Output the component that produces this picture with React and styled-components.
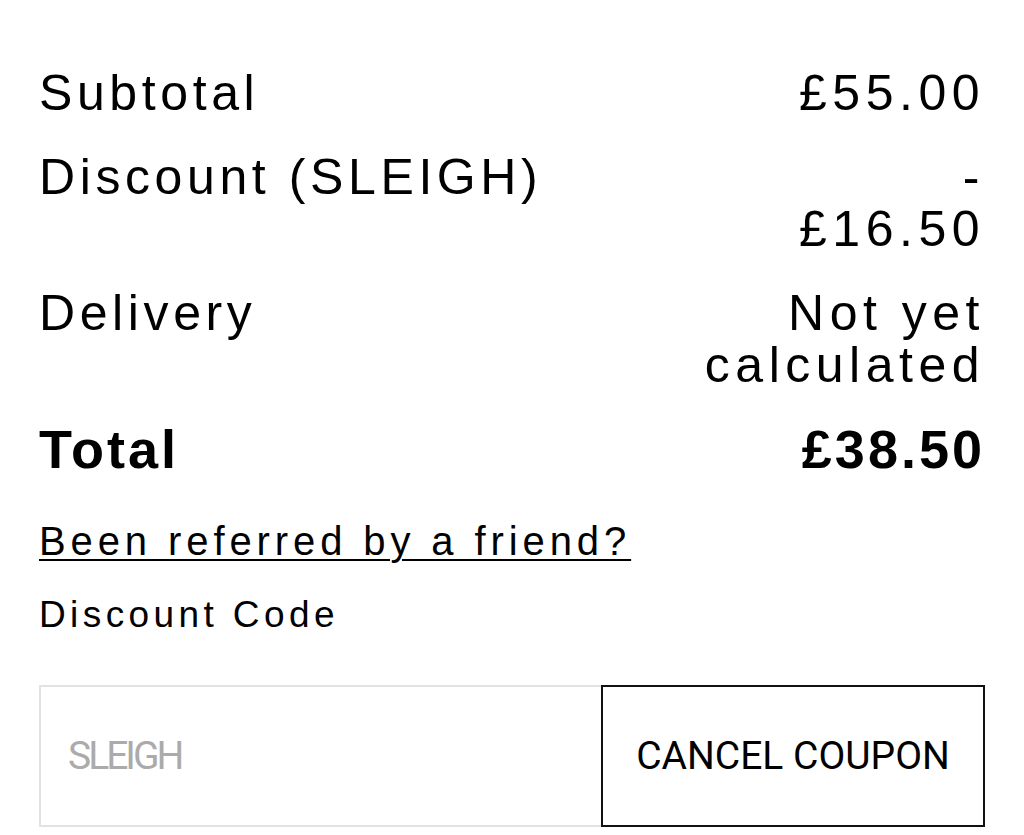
import React from "react";
import styled, { createGlobalStyle } from "styled-components";

const GlobalStyle = createGlobalStyle`
    body {
        margin: 0;
        background: #fff;
        color: #000;
        font-family: "Liberation Sans", Arial, sans-serif;
    }
`;

const Summary = styled.div`
    padding: 67px 39px 0;
`;

const Rows = styled.div`
    display: flex;
    flex-direction: column;
    gap: 32px;
`;

const Row = styled.div`
    display: flex;
    justify-content: space-between;
    align-items: flex-start;
    font-size: ${(p) => (p.$total ? "54px" : "50px")};
    font-weight: ${(p) => (p.$total ? 700 : 400)};
    letter-spacing: ${(p) => (p.$total ? "3px" : "4.6px")};
    line-height: 52px;
`;

const Value = styled.div`
    text-align: right;
    letter-spacing: ${(p) => (p.$total ? "3px" : "5.5px")};
    max-width: ${(p) => (p.$narrow ? "300px" : "none")};
`;

const ReferLink = styled.a`
    display: inline-block;
    margin-top: 42px;
    font-size: 40px;
    line-height: 48px;
    letter-spacing: 4.9px;
    color: #000;
    text-decoration: underline;
    text-decoration-thickness: 2px;
    text-underline-offset: 4px;
`;

const FieldLabel = styled.label`
    display: block;
    margin-top: 28px;
    font-size: 37px;
    line-height: 44px;
    letter-spacing: 4.4px;
`;

const CouponForm = styled.div`
    display: flex;
    margin-top: 48px;
    height: 142px;
`;

const CodeInput = styled.input`
    flex: 1;
    min-width: 0;
    box-sizing: border-box;
    height: 100%;
    border: 2px solid #e2e2e2;
    border-right: none;
    padding: 0 0 0 27px;
    font-family: Roboto, sans-serif;
    font-size: 39px;
    letter-spacing: -3px;
    color: #000;
    outline: none;
    &::placeholder {
        color: #ababab;
    }
`;

const CancelButton = styled.button`
    width: 384px;
    box-sizing: border-box;
    height: 100%;
    background: #fff;
    border: 2px solid #111;
    font-family: Roboto, sans-serif;
    font-size: 39px;
    letter-spacing: 0;
    color: #000;
    padding: 0;
    cursor: pointer;
`;

export default function App() {
    return (
        <>
            <GlobalStyle />
            <Summary>
                <Rows>
                    <Row>
                        <span>Subtotal</span>
                        <Value>£55.00</Value>
                    </Row>
                    <Row>
                        <span>Discount (SLEIGH)</span>
                        <Value>
                            -<br />
                            £16.50
                        </Value>
                    </Row>
                    <Row>
                        <span>Delivery</span>
                        <Value $narrow>Not yet calculated</Value>
                    </Row>
                    <Row $total>
                        <span>Total</span>
                        <Value $total>£38.50</Value>
                    </Row>
                </Rows>
                <ReferLink href="#">Been referred by a friend?</ReferLink>
                <FieldLabel htmlFor="discount-code">Discount Code</FieldLabel>
                <CouponForm>
                    <CodeInput id="discount-code" placeholder="SLEIGH" />
                    <CancelButton type="button">CANCEL COUPON</CancelButton>
                </CouponForm>
            </Summary>
        </>
    );
}
